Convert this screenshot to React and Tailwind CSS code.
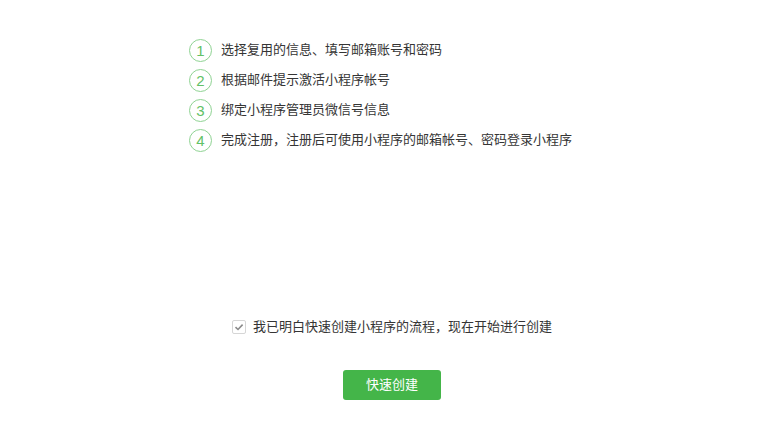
const steps = [
  '选择复用的信息、填写邮箱账号和密码',
  '根据邮件提示激活小程序帐号',
  '绑定小程序管理员微信号信息',
  '完成注册，注册后可使用小程序的邮箱帐号、密码登录小程序',
]

const App = () => {
  return (
    <div
      className="w-[784px] h-[440px] bg-white text-[#353535] flex flex-col"
      style={{ fontFamily: '"Liberation Sans", "Noto Sans CJK SC", sans-serif' }}
    >
      <ul className="pt-[35px] pl-[189px] flex flex-col">
        {steps.map((step, i) => (
          <li key={i} className="h-[30px] flex items-center">
            <span className="w-[23px] h-[23px] rounded-full border-[1.5px] border-[#8fd393] text-[#62c166] text-[15px] flex items-center justify-center leading-none">
              {i + 1}
            </span>
            <span className="ml-[9px] text-[13px]">{step}</span>
          </li>
        ))}
      </ul>

      <label className="mt-[163px] flex items-center justify-center h-[18px]">
        <span className="w-[14px] h-[14px] border border-[#d6d6d6] rounded-[2px] flex items-center justify-center">
          <svg width="10" height="10" viewBox="0 0 10 10">
            <path d="M1.5 5.2 L4 7.5 L8.6 2.6" fill="none" stroke="#8a8a8a" strokeWidth="1.6" />
          </svg>
        </span>
        <span className="ml-[7px] text-[13px]">我已明白快速创建小程序的流程，现在开始进行创建</span>
      </label>

      <div className="mt-[34px] flex justify-center">
        <button className="w-[98px] h-[30px] rounded-[3px] bg-[#44b549] text-white text-[13px]">
          快速创建
        </button>
      </div>
    </div>
  )
}

export default App
